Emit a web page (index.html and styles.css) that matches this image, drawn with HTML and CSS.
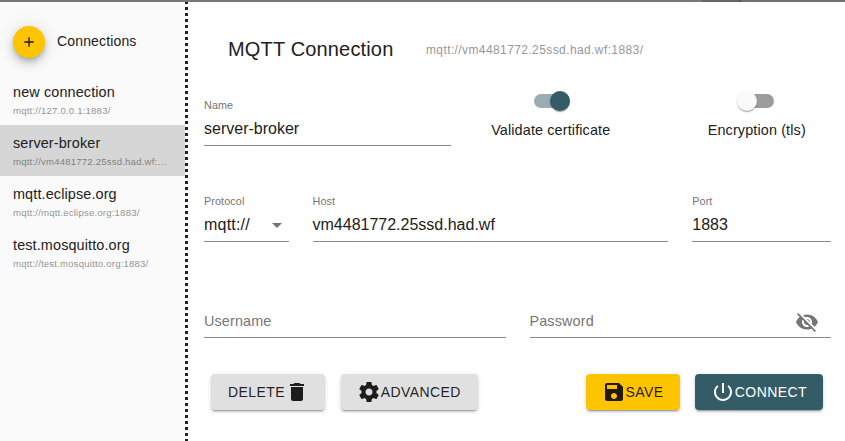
FILE: index.html
```html
<!DOCTYPE html>
<html lang="en">
<head>
<meta charset="utf-8">
<title>MQTT Connection</title>
<link rel="stylesheet" href="styles.css">
</head>
<body>
<div class="topbar"></div>
<div class="dialog">
  <aside class="sidebar">
    <header class="sidebar-head">
      <button class="fab" aria-label="Add connection"><svg width="20" height="20" viewBox="0 0 24 24"><path d="M19 13h-6v6h-2v-6H5v-2h6V5h2v6h6v2z"/></svg></button>
      <span class="sidebar-title">Connections</span>
    </header>
    <ul class="list">
      <li class="item"><div class="primary">new connection</div><div class="secondary">mqtt://127.0.0.1:1883/</div></li>
      <li class="item selected"><div class="primary">server-broker</div><div class="secondary">mqtt://vm4481772.25ssd.had.wf:…</div></li>
      <li class="item"><div class="primary">mqtt.eclipse.org</div><div class="secondary">mqtt://mqtt.eclipse.org:1883/</div></li>
      <li class="item"><div class="primary">test.mosquitto.org</div><div class="secondary">mqtt://test.mosquitto.org:1883/</div></li>
    </ul>
  </aside>
  <div class="divider"></div>
  <main class="main">
    <header class="main-head">
      <h1>MQTT Connection</h1>
      <span class="url">mqtt://vm4481772.25ssd.had.wf:1883/</span>
    </header>
    <form class="form">
      <div class="field span5"><label>Name</label><div class="value">server-broker</div></div>
      <div class="switches">
        <div class="toggle"><span class="switch on"></span><span class="caption">Validate certificate</span></div>
        <div class="toggle"><span class="switch"></span><span class="caption">Encryption (tls)</span></div>
      </div>
      <div class="field span2"><label>Protocol</label><div class="value select">mqtt://<svg width="24" height="24" viewBox="0 0 24 24"><path d="M7 10l5 5 5-5z"/></svg></div></div>
      <div class="field span7"><label>Host</label><div class="value">vm4481772.25ssd.had.wf</div></div>
      <div class="field span3"><label>Port</label><div class="value">1883</div></div>
      <div class="field span6"><div class="value placeholder">Username</div></div>
      <div class="field span6"><div class="value placeholder">Password<svg class="eye" width="24" height="24" viewBox="0 0 24 24"><path d="M12 7c2.76 0 5 2.24 5 5 0 .65-.13 1.26-.36 1.83l2.92 2.92c1.51-1.26 2.7-2.89 3.43-4.75-1.73-4.39-6-7.5-11-7.5-1.4 0-2.74.25-3.98.7l2.16 2.16C10.74 7.13 11.35 7 12 7zM2 4.27l2.28 2.28.46.46C3.08 8.3 1.78 10.02 1 12c1.73 4.39 6 7.5 11 7.5 1.55 0 3.03-.3 4.38-.84l.42.42L19.73 22 21 20.73 3.27 3 2 4.27zM7.53 9.8l1.55 1.55c-.05.21-.08.43-.08.65 0 1.66 1.34 3 3 3 .22 0 .44-.03.65-.08l1.55 1.55c-.67.33-1.41.53-2.2.53-2.76 0-5-2.24-5-5 0-.79.2-1.53.53-2.2zm4.31-.78l3.15 3.15.02-.16c0-1.66-1.34-3-3-3l-.17.01z"/></svg></div></div>
    </form>
    <div class="actions">
      <button class="btn delete">DELETE<svg width="24" height="24" viewBox="0 0 24 24"><path d="M6 19c0 1.1.9 2 2 2h8c1.1 0 2-.9 2-2V7H6v12zM19 4h-3.500l-1-1h-5l-1 1H5v2h14V4z"/></svg></button>
      <button class="btn"><svg width="24" height="24" viewBox="0 0 24 24"><path d="M19.43 12.98c.04-.32.07-.64.07-.98s-.03-.66-.07-.98l2.11-1.65c.19-.15.24-.42.12-.64l-2-3.46c-.12-.22-.39-.3-.61-.22l-2.49 1c-.52-.4-1.08-.73-1.69-.98l-.38-2.65C14.46 2.18 14.25 2 14 2h-4c-.25 0-.46.18-.49.42l-.38 2.65c-.61.25-1.17.59-1.69.98l-2.49-1c-.23-.09-.49 0-.61.22l-2 3.46c-.13.22-.07.49.12.64l2.11 1.65c-.04.32-.07.65-.07.98s.03.66.07.98l-2.11 1.65c-.19.15-.24.42-.12.64l2 3.46c.12.22.39.3.61.22l2.49-1c.52.4 1.08.73 1.69.98l.38 2.65c.03.24.24.42.49.42h4c.25 0 .46-.18.49-.42l.38-2.65c.61-.25 1.17-.59 1.69-.98l2.490 1c.23.09.49 0 .61-.22l2-3.46c.12-.22.07-.49-.12-.64l-2.110-1.650zM12 15.500c-1.930 0-3.500-1.570-3.500-3.500s1.570-3.500 3.500-3.500 3.500 1.570 3.500 3.500-1.570 3.500-3.500 3.500z"/></svg>ADVANCED</button>
      <span class="spacer"></span>
      <button class="btn save"><svg width="24" height="24" viewBox="0 0 24 24"><path d="M17 3H5c-1.110 0-2 .9-2 2v14c0 1.100.89 2 2 2h14c1.100 0 2-.9 2-2V7l-4-4zm-5 16c-1.660 0-3-1.340-3-3s1.340-3 3-3 3 1.340 3 3-1.340 3-3 3zm3-10H5V5h10v4z"/></svg>SAVE</button>
      <button class="btn connect"><svg width="24" height="24" viewBox="0 0 24 24"><path d="M13 3h-2v10h2V3zm4.830 2.170l-1.420 1.420C17.990 7.860 19 9.810 19 12c0 3.870-3.130 7-7 7s-7-3.130-7-7c0-2.190 1.010-4.140 2.580-5.420L6.170 5.170C4.230 6.820 3 9.260 3 12c0 4.970 4.030 9 9 9s9-4.030 9-9c0-2.740-1.230-5.180-3.170-6.830z"/></svg>CONNECT</button>
    </div>
  </main>
</div>
</body>
</html>
```
FILE: styles.css
```css
* { box-sizing: border-box; }

body {
  margin: 0;
  width: 845px;
  height: 441px;
  overflow: hidden;
  display: flex;
  flex-direction: column;
  background: #fff;
  color: #212121;
  font-family: Helvetica, "Liberation Sans", Arial, sans-serif;
}

svg { display: block; flex: none; fill: currentColor; }

.topbar {
  height: 2px;
  flex: none;
  background: linear-gradient(90deg, #7a7777 0 702px, #6b6565 702px 739px, #505357 739px 741px, #6e7277 741px);
}

.dialog { flex: 1; display: flex; min-height: 0; }

.sidebar { width: 185px; background: #fafafa; flex: none; }

.divider {
  width: 3px;
  background: repeating-linear-gradient(180deg, #212121 0 2px, #fff 2px 5px, #212121 5px 6px);
}

.sidebar-head { display: flex; align-items: flex-start; gap: 12px; padding: 20px 13px 0; height: 72px; }

.fab {
  width: 32px;
  height: 32px;
  margin-top: 4px;
  border: 0;
  border-radius: 50%;
  padding: 0;
  display: flex;
  align-items: center;
  justify-content: center;
  background: #ffc400;
  color: rgba(0, 0, 0, .87);
  box-shadow: 0 3px 5px -1px rgba(0, 0, 0, .2), 0 6px 10px 0 rgba(0, 0, 0, .14), 0 1px 18px 0 rgba(0, 0, 0, .12);
}
.fab svg { width: 16px; height: 16px; }

.sidebar-title { font-size: 14px; letter-spacing: .15px; line-height: 20px; margin-top: 9px; }

.list { list-style: none; margin: 0; padding: 0; }
.item { height: 51px; padding: 8px 13px 0; }
.item.selected { background: #d6d6d6; }
.primary { font-size: 14.4px; letter-spacing: .135px; line-height: 21px; }
.secondary {
  font-size: 9.6px;
  letter-spacing: .19px;
  line-height: 15px;
  color: rgba(33, 33, 33, .5);
  white-space: nowrap;
}

.main { flex: 1; padding: 0 14px 0 16px; min-width: 0; }

.main-head { display: flex; align-items: center; gap: 32.5px; height: 95px; padding: 0 24px; }
h1 { margin: 0; font-size: 20px; font-weight: 400; letter-spacing: .16px; }
.url { font-size: 12px; letter-spacing: .4px; color: #979797; }

.form {
  display: grid;
  grid-template-columns: repeat(12, 1fr);
  column-gap: 24px;
  grid-auto-rows: 96px;
}

.field { height: 49px; border-bottom: 1px solid #8c8c8c; display: flex; flex-direction: column; justify-content: flex-end; }
.field label { font-size: 10.8px; letter-spacing: .1px; line-height: 14px; color: #757575; }
.value { font-size: 16px; line-height: 19px; padding: 7px 0; display: flex; align-items: center; height: 33px; }
.placeholder { font-size: 14.4px; letter-spacing: .135px; color: #757575; padding: 9px 0 7px; }
.select { letter-spacing: .2px; }
.select svg { margin-left: auto; color: #757575; }
.eye { margin-left: auto; margin-right: 12px; }

.span2 { grid-column: span 2; }
.span3 { grid-column: span 3; }
.span5 { grid-column: span 5; }
.span6 { grid-column: span 6; }
.span7 { grid-column: span 7; }

.switches { grid-column: span 7; display: grid; grid-template-columns: 151px 1fr; }
.switches .toggle:last-child { margin-left: 56px; width: 149px; }
.toggle { display: flex; flex-direction: column; align-items: center; height: 49px; margin-top: -3px; }
.caption { font-size: 14.4px; letter-spacing: .135px; line-height: 20px; margin-top: 12px; white-space: nowrap; }
.switch { position: relative; width: 34px; height: 14px; border-radius: 7px; background: #9c9c9c; flex: none; }
.switch::after {
  content: "";
  position: absolute;
  left: -3px;
  top: -3px;
  width: 20px;
  height: 20px;
  border-radius: 50%;
  background: #fafafa;
  box-shadow: 0 2px 1px -1px rgba(0, 0, 0, .2), 0 1px 1px 0 rgba(0, 0, 0, .14), 0 1px 3px 0 rgba(0, 0, 0, .12);
}
.switch.on { background: #9aadb2; }
.switch.on::after { left: 16px; background: #335c67; }

.actions { display: flex; padding: 0 8px 0 7.3px; margin-top: -11px; }
.spacer { flex: 1; }
.btn {
  height: 36px;
  border: 0;
  border-radius: 4px;
  padding: 0 17px 0 16px;
  display: flex;
  align-items: center;
  background: #e0e0e0;
  color: rgba(0, 0, 0, .87);
  font: 400 14px/24px Helvetica, "Liberation Sans", Arial, sans-serif;
  letter-spacing: .42px;
  box-shadow: 0 3px 1px -2px rgba(0, 0, 0, .2), 0 2px 2px 0 rgba(0, 0, 0, .14), 0 1px 5px 0 rgba(0, 0, 0, .12);
}
.btn + .btn { margin-left: 15.3px; }
.delete { padding: 0 16px 0 16.700px; }
.delete svg { margin-left: .4px; }
.save { background: #ffc400; padding-right: 16px; }
.connect { background: #335c67; color: #fff; padding-right: 16px; }
```
